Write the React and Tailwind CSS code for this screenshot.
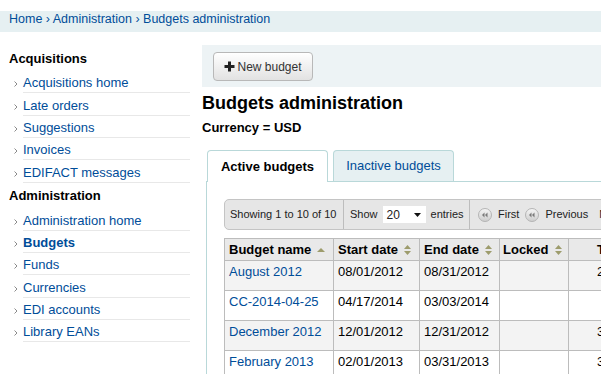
import React from 'react';

const acqLinks = ['Acquisitions home', 'Late orders', 'Suggestions', 'Invoices', 'EDIFACT messages'];
const adminLinks = ['Administration home', 'Budgets', 'Funds', 'Currencies', 'EDI accounts', 'Library EANs'];

const budgets = [
    { name: 'August 2012', start: '08/01/2012', end: '08/31/2012', total: '2000.00' },
    { name: 'CC-2014-04-25', start: '04/17/2014', end: '03/03/2014', total: '' },
    { name: 'December 2012', start: '12/01/2012', end: '12/31/2012', total: '3000.00' },
    { name: 'February 2013', start: '02/01/2013', end: '03/31/2013', total: '3000.00' },
];

function Chevron() {
    return (
        <svg width="4" height="6" viewBox="0 0 4 6" className="mt-[4px]">
            <polyline points="0.5,0.5 3,3 0.5,5.5" fill="none" stroke="#8a8a8a" strokeWidth="1" />
        </svg>
    );
}

function SideLink({ label, active }) {
    return (
        <li className="flex items-center">
            <span className="w-[14px] flex justify-start pl-[5px]"><Chevron /></span>
            <div className="flex-1 h-[22.35px] pt-[2px] border-b border-[#e8e8e8] flex items-center">
                <a href="#" className={`text-[#004d99] leading-[15px] ${active ? 'font-bold' : ''}`}>{label}</a>
            </div>
        </li>
    );
}

function SortBoth() {
    return (
        <svg width="7" height="10" viewBox="0 0 7 10" className="ml-[6px] shrink-0">
            <polygon points="3.5,0 7,4 0,4" fill="#9d9c6c" />
            <polygon points="0,6 7,6 3.5,10" fill="#9d9c6c" />
        </svg>
    );
}

function SortAsc() {
    return (
        <svg width="8" height="4" viewBox="0 0 8 4" className="ml-[6px] shrink-0">
            <polygon points="4,0 8,4 0,4" fill="#9d9c6c" />
        </svg>
    );
}

function PagerIcon() {
    return (
        <svg width="14" height="14" viewBox="0 0 14 14" className="shrink-0">
            <defs>
                <linearGradient id="pg" x1="0" y1="0" x2="0" y2="1">
                    <stop offset="0" stopColor="#f6f6f6" />
                    <stop offset="1" stopColor="#cdcdcd" />
                </linearGradient>
            </defs>
            <circle cx="7" cy="7" r="6.5" fill="url(#pg)" stroke="#b4b4b4" />
            <polygon points="6.5,4.5 6.5,9.5 4,7" fill="#7a7a7a" />
            <polygon points="9.5,4.5 9.5,9.5 7,7" fill="#7a7a7a" />
        </svg>
    );
}

export default function App() {
    return (
        <div className="w-[601px] h-[374px] overflow-hidden bg-white text-[13px] text-black font-['Liberation_Sans',Arial,sans-serif]">
            {/* breadcrumbs */}
            <div className="mt-[11px] h-[21px] bg-[#e6f0f2] pl-[9px] pt-[1px] leading-[15px] text-[12.5px] text-[#004d99] whitespace-nowrap">
                <a href="#">Home</a> › <a href="#">Administration</a> › <a href="#">Budgets administration</a>
            </div>

            <div className="flex mt-[13px]">
                {/* sidebar */}
                <div className="w-[202px] shrink-0 pl-[9px] pr-[12px]">
                    <h5 className="h-[26px] flex items-center font-bold leading-[15px]">Acquisitions</h5>
                    <ul>
                        {acqLinks.map(l => <SideLink key={l} label={l} />)}
                    </ul>
                    <h5 className="h-[25.7px] flex items-center font-bold leading-[15px]">Administration</h5>
                    <ul>
                        {adminLinks.map(l => <SideLink key={l} label={l} active={l === 'Budgets'} />)}
                    </ul>
                </div>

                {/* main */}
                <div className="flex-1 min-w-0">
                    <div className="h-[42px] bg-[#edf3f5] pl-[11px] pt-[7px]">
                        <button className="w-[100px] h-[29px] rounded-[4px] border border-[#b8b8b8] bg-gradient-to-b from-white to-[#e2e2e2] flex items-center justify-center gap-[2px] text-[12px] text-[#333] shadow-[inset_0_1px_0_#fff]">
                            <svg width="11" height="11" viewBox="0 0 11 11">
                                <rect x="4" y="0.5" width="3" height="10" fill="#222" />
                                <rect x="0.5" y="4" width="10" height="3" fill="#222" />
                            </svg>
                            New budget
                        </button>
                    </div>

                    <h1 className="mt-[5px] h-[22px] leading-[22px] text-[18px] font-bold">Budgets administration</h1>
                    <p className="mt-[6px] h-[16px] leading-[16px] font-bold">Currency = USD</p>

                    {/* tabs */}
                    <div className="mt-[14px] ml-[4px]">
                        <ul className="flex items-start gap-[5px] pl-[1px] relative z-10 -mb-[1px]">
                            <li className="w-[121px] h-[32px] bg-white border border-b-0 border-[#b9d8d9] rounded-t-[4px] flex items-center justify-center font-bold">
                                Active budgets
                            </li>
                            <li className="w-[121px] h-[31px] bg-[#e6f0f2] border border-b-0 border-[#b9d8d9] rounded-t-[4px] flex items-center justify-center">
                                <a href="#" className="text-[#004d99]">Inactive budgets</a>
                            </li>
                        </ul>
                        <div className="border-t border-l border-[#b9d8d9] pl-[17px] pt-[17px] pb-4">
                            {/* pager */}
                            <div className="w-[520px] h-[31px] bg-[#e6e6e6] border border-[#c4c4c4] rounded-[5px] flex items-stretch text-[11px] text-[#222] whitespace-nowrap">
                                <div className="w-[119px] flex items-center pl-[5px] border-r border-[#bdbdbd]">
                                    Showing 1 to 10 of 10
                                </div>
                                <div className="w-[126px] flex items-center pl-[6px] border-r border-[#bdbdbd]">
                                    <span>Show</span>
                                    <span className="ml-[5px] w-[43px] h-[17px] bg-white flex items-center justify-between pl-[4px] pr-[5px] text-[12px]">
                                        20
                                        <svg width="7" height="4" viewBox="0 0 7 4"><polygon points="0,0 7,0 3.5,4" fill="#111" /></svg>
                                    </span>
                                    <span className="ml-[5px]">entries</span>
                                </div>
                                <div className="flex items-center pl-[8px] gap-[6px]">
                                    <PagerIcon />
                                    <span>First</span>
                                    <PagerIcon />
                                    <span>Previous</span>
                                    <span className="ml-[5px]">Next</span>
                                </div>
                            </div>

                            {/* table */}
                            <div className="mt-[8px] w-[560px] border-l border-t border-[#bcbcbc]">
                                <div className="grid grid-cols-[109px_86px_80px_69px_1fr] h-[22px] bg-[#e9e9e9] font-bold">
                                    <div className="flex items-center pl-[4px] border-r border-b border-[#bcbcbc]">Budget name<SortAsc /></div>
                                    <div className="flex items-center pl-[4px] border-r border-b border-[#bcbcbc]">Start date<SortBoth /></div>
                                    <div className="flex items-center pl-[4px] border-r border-b border-[#bcbcbc]">End date<SortBoth /></div>
                                    <div className="flex items-center pl-[3px] border-r border-b border-[#bcbcbc]">Locked<SortBoth /></div>
                                    <div className="flex items-center pl-[28px] border-r border-b border-[#bcbcbc]">Total</div>
                                </div>
                                {budgets.map((b, i) => (
                                    <div key={b.name} className={`grid grid-cols-[109px_86px_80px_69px_1fr] h-[30px] leading-[15px] ${i % 2 === 0 ? 'bg-[#f3f3f3]' : 'bg-white'}`}>
                                        <div className="pl-[4px] pt-[3px] border-r border-b border-[#bcbcbc]"><a href="#" className="text-[#004d99]">{b.name}</a></div>
                                        <div className="pl-[4px] pt-[3px] border-r border-b border-[#bcbcbc]">{b.start}</div>
                                        <div className="pl-[4px] pt-[3px] border-r border-b border-[#bcbcbc]">{b.end}</div>
                                        <div className="pl-[4px] pt-[3px] border-r border-b border-[#bcbcbc]"></div>
                                        <div className="pl-[28px] pt-[3px] border-r border-b border-[#bcbcbc]">{b.total}</div>
                                    </div>
                                ))}
                            </div>
                        </div>
                    </div>
                </div>
            </div>
        </div>
    );
}
